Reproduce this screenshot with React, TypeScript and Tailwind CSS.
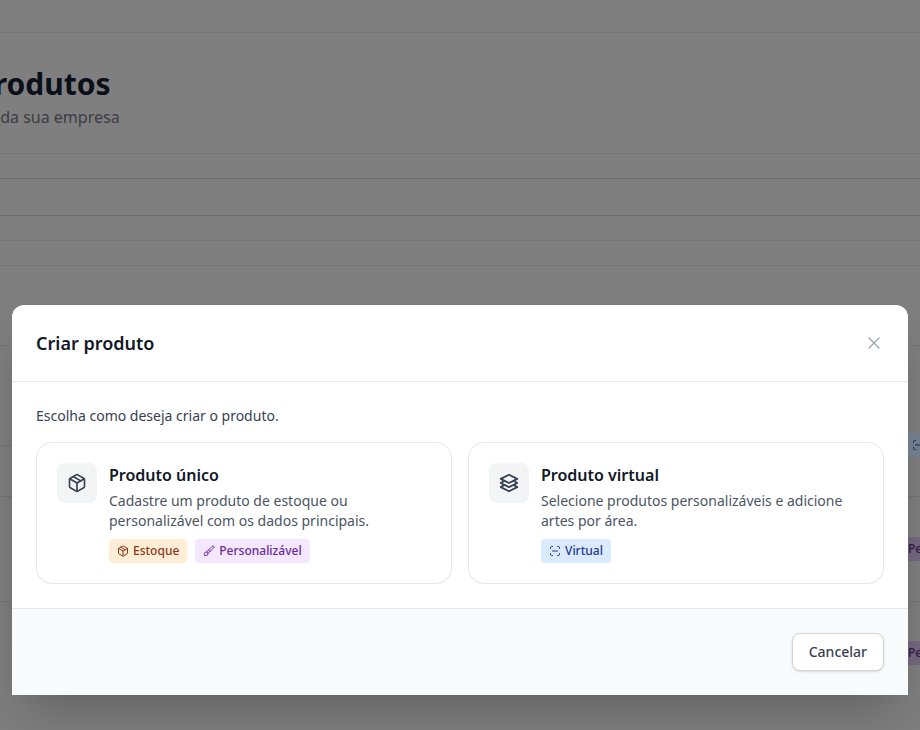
import React from "react";
import { Brush, Package, ScanLine, X } from "lucide-react";

const Tag = ({ className, icon, label }: { className: string; icon: React.ReactNode; label: string }) => (
  <span className={`inline-flex h-6 items-center gap-1 rounded px-2 text-xs font-medium ${className}`}>
    {icon}
    {label}
  </span>
);

const BackRow = ({ className, children }: { className: string; children?: React.ReactNode }) => (
  <div className={`flex items-center justify-end overflow-hidden border-b ${className}`}>{children}</div>
);

const PeBadge = () => (
  <span className="-mr-4 inline-flex h-6 w-9 items-center rounded bg-[#75697f] pl-2 text-xs font-medium text-[#2f1848]">Pe</span>
);

const StackIcon = () => (
  <svg viewBox="0 0 24 24" fill="none" stroke="currentColor" strokeWidth="2" strokeLinecap="round" strokeLinejoin="round" className="h-[22px] w-[22px] text-[#374151]">
    <path d="M12 3 3 7.5 12 12l9-4.5z" />
    <path d="M6.5 9.8 3 12l9 4.5 9-4.5-3.5-2.2" />
    <path d="M6.5 14.3 3 16.5 12 21l9-4.5-3.5-2.2" />
  </svg>
);

export default function App() {
  return (
    <div className="relative h-[730px] w-[920px] overflow-hidden bg-[#7f7f7f] font-['Noto_Sans',sans-serif]">
      <div className="flex flex-col">
        <BackRow className="h-[33px] border-[#747675]" />
        <div className="h-[121px] border-b border-[#747675] pt-[31px]">
          <h1 className="-ml-[25px] text-3xl leading-10 font-bold text-[#0a0f19]">Produtos</h1>
          <p className="-ml-[165px] mt-px text-base leading-6 text-[#3a3d44]">Gerencie os produtos da sua empresa</p>
        </div>
        <BackRow className="h-[25px] border-[#696a6a]" />
        <BackRow className="h-[37px] border-[#696a6a]">
          <span className="mr-auto -ml-3 pt-1 text-xs text-[#5a5b5c]">...</span>
        </BackRow>
        <BackRow className="h-[25px] border-[#747675]" />
        <BackRow className="h-[25px] border-[#747675]" />
        <BackRow className="h-[80px] border-[#747675]" />
        <BackRow className="h-[100px] border-[#747675]" />
        <BackRow className="h-[51px] border-[#747675]" />
        <BackRow className="h-[105px] border-[#747675]">
          <PeBadge />
        </BackRow>
        <BackRow className="h-[102px] border-transparent">
          <PeBadge />
        </BackRow>
      </div>

      <div className="absolute top-[305px] left-3 flex h-[390px] w-[896px] flex-col overflow-hidden rounded-t-xl bg-white shadow-2xl">
        <div className="flex h-[77px] items-center justify-between border-b border-[#e5e7eb] px-6">
          <h2 className="text-lg font-semibold text-[#111827]">Criar produto</h2>
          <X size={20} strokeWidth={1.5} className="text-[#9ca3af]" />
        </div>
        <div className="flex-1 px-6 pt-6">
          <p className="text-sm leading-5 text-[#374151]">Escolha como deseja criar o produto.</p>
          <div className="mt-4 grid grid-cols-2 gap-4">
            <div className="flex h-[142px] gap-3 rounded-2xl border border-[#e5e7eb] px-5 pt-5">
              <div className="flex h-10 w-10 shrink-0 items-center justify-center rounded-lg bg-[#f3f4f6]">
                <Package size={20} strokeWidth={2} className="text-[#374151]" />
              </div>
              <div>
                <h3 className="text-base leading-6 font-semibold text-[#111827]">Produto único</h3>
                <p className="mt-1 text-sm leading-5 text-[#4b5563]">
                  Cadastre um produto de estoque ou personalizável com os dados principais.
                </p>
                <div className="mt-2 flex gap-2">
                  <Tag className="bg-[#ffedd5] text-[#8a3a1a]" icon={<Package size={12} />} label="Estoque" />
                  <Tag className="bg-[#f3e8ff] text-[#6b2a9a]" icon={<Brush size={12} />} label="Personalizável" />
                </div>
              </div>
            </div>
            <div className="flex h-[142px] gap-3 rounded-2xl border border-[#e5e7eb] px-5 pt-5">
              <div className="flex h-10 w-10 shrink-0 items-center justify-center rounded-lg bg-[#f3f4f6]">
                <StackIcon />
              </div>
              <div>
                <h3 className="text-base leading-6 font-semibold text-[#111827]">Produto virtual</h3>
                <p className="mt-1 text-sm leading-5 text-[#4b5563]">
                  Selecione produtos personalizáveis e adicione artes por área.
                </p>
                <div className="mt-2 flex gap-2">
                  <Tag className="bg-[#dbeafe] text-[#1e3a8a]" icon={<ScanLine size={12} />} label="Virtual" />
                </div>
              </div>
            </div>
          </div>
        </div>
        <div className="flex h-[87px] items-center justify-end border-t border-[#e5e7eb] bg-[#f9fafb] px-6">
          <button className="h-[38px] rounded-lg border border-[#d1d5db] bg-white px-4 text-sm font-medium text-[#374151] shadow-sm">
            Cancelar
          </button>
        </div>
      </div>

      <span className="absolute top-[433px] left-[908px] flex h-6 w-6 items-center bg-[#6f7c8c] pl-1 text-[#1e2a4a]">
        <ScanLine size={12} />
      </span>
    </div>
  );
}
